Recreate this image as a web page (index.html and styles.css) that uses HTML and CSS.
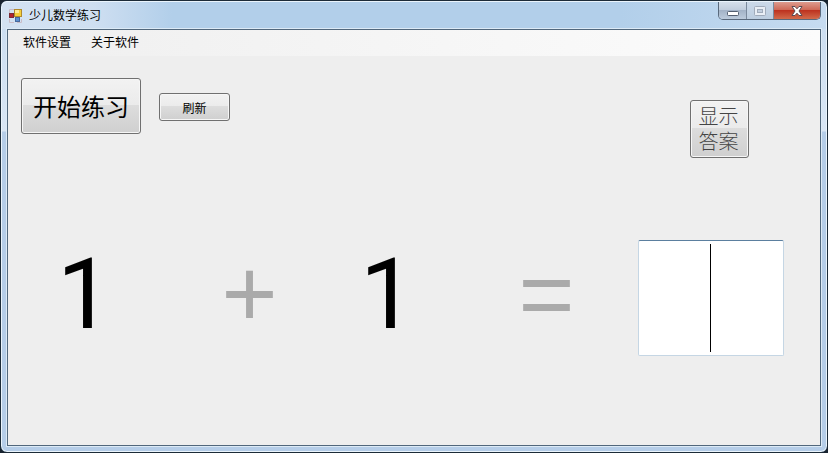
FILE: index.html
```html
<!DOCTYPE html>
<html lang="zh-CN">
<head>
  <meta charset="UTF-8">
  <title>少儿数学练习</title>
  <link rel="stylesheet" href="styles.css">
</head>
<body>

  <div class="window">

    <!-- TITLE BAR -->
    <header class="titlebar">
      <svg class="app-icon" width="14" height="14" viewBox="0 0 14 14">
        <path d="M0.5 4V0.5H5M0.5 10V13.5H5M8 13.5H12.5V10" fill="none" stroke="#c9bcc6"/>
        <rect x="0.5" y="4.5" width="4" height="4" fill="#b5232b" stroke="#7a2a35"/>
        <rect x="5.5" y="0.5" width="7" height="7" fill="#f5cf3a" stroke="#b08a2c"/>
        <rect x="6" y="1" width="4" height="3" fill="#fdeb9a"/>
        <rect x="6.5" y="8.5" width="4" height="4" fill="#5b8fd0" stroke="#46699c"/>
      </svg>
      <h1>少儿数学练习</h1>
      <div class="window-buttons">
        <button class="minimize" aria-label="最小化">
          <svg width="14" height="6" viewBox="0 0 14 6">
            <rect x="1.5" y="0.5" width="11" height="4" rx="1" fill="#fff" stroke="#535f70"/>
          </svg>
        </button>
        <button class="maximize" aria-label="最大化" disabled>
          <svg width="12" height="10" viewBox="0 0 12 10">
            <rect x="0.5" y="0.5" width="11" height="9" rx="1" fill="#e9eef5" stroke="#a0abba"/>
            <rect x="3.5" y="3.5" width="5" height="3" fill="#c3cfde" stroke="#a0abba"/>
          </svg>
        </button>
        <button class="close" aria-label="关闭">
          <svg width="12" height="10" viewBox="0 0 12 10">
            <path d="M1 0.5H4L6 2.8L8 0.5H11L8 5L11 9.5H8L6 7.2L4 9.5H1L4 5Z" fill="#fff" stroke="#5b4a52"/>
          </svg>
        </button>
      </div>
    </header>

    <div class="client">

      <!-- MENU -->
      <nav>
        <a href="#settings">软件设置</a>
        <a href="#about">关于软件</a>
      </nav>

      <main>
        <div class="toolbar">
          <button class="btn start">开始练习</button>
          <button class="btn refresh">刷新</button>
          <button class="btn answer">显示<br>答案</button>
        </div>

        <!-- EQUATION -->
        <form class="equation">
          <span class="number">1</span>
          <span class="sign">+</span>
          <span class="number">1</span>
          <span class="sign">=</span>
          <input type="text" class="result" aria-label="答案" autocomplete="off">
        </form>
      </main>

    </div>
  </div>

</body>
</html>
```

FILE: styles.css
```css
* {
  box-sizing: border-box;
}

body {
  margin: 0;
  background: #17222e;
  font-family: "Liberation Sans", "Noto Sans CJK SC", sans-serif;
  font-size: 12px;
  color: #000;
}

button, input {
  font-family: inherit;
  margin: 0;
}

.window {
  display: flex;
  flex-direction: column;
  min-height: 100vh;
  padding: 0 6px 6px;
  border: 1px solid #1c2b38;
  border-radius: 7px;
  background: linear-gradient(#c9dcf0 0, #d9e6f4 130px, #b5cde8 131px, #b5cde8 100%);
  box-shadow: inset 0 0 0 1px #eaf4fc;
}

/* Title bar */
.titlebar {
  display: flex;
  align-items: center;
  height: 28px;
  margin: 0 -5px;
  padding: 0 5px 0 7px;
  border-top: 1px solid #eaf4fc;
  border-radius: 6px 6px 0 0;
  background: linear-gradient(to right, #d3e2f2 0, #cfdff1 90px, #b2cfea 170px, #b2cfea 75%, #c6dbf0 100%);
}

.titlebar h1 {
  flex: 1;
  margin: 0 0 0 6px;
  padding-bottom: 2px;
  font-size: 12px;
  font-weight: normal;
}

.window-buttons {
  display: flex;
  align-self: flex-start;
  border: 1px solid #59697c;
  border-top: none;
  border-radius: 0 0 5px 5px;
  overflow: hidden;
}

.window-buttons button {
  display: flex;
  align-items: center;
  justify-content: center;
  width: 28px;
  height: 17px;
  padding: 0;
  border: none;
  border-right: 1px solid #7a899c;
  background: linear-gradient(#d5dfeb 0, #bfccdc 50%, #a3b3c7 50%, #bccbdc 100%);
}

.window-buttons .minimize {
  padding-top: 6px;
}

.window-buttons .maximize {
  width: 27px;
  background: linear-gradient(#cbd9e9, #bccddf);
}

.window-buttons .close {
  width: 46px;
  border-right: none;
  background: linear-gradient(#dd9c8f 0, #cf6a58 45%, #bd3320 50%, #d26b4b 100%);
}

/* Client area */
.client {
  flex: 1;
  display: flex;
  flex-direction: column;
  border: 1px solid #51677c;
  background: #eee;
  box-shadow: 0 0 0 1px #dceaf6;
}

nav {
  display: flex;
  gap: 20px;
  padding: 4px 15px;
  line-height: 18px;
  background: linear-gradient(to right, #efefef, #fcfcfc);
}

nav a {
  color: #000;
  text-decoration: none;
}

main {
  padding: 22px 36px 0 13px;
}

.toolbar {
  display: flex;
  align-items: flex-start;
  gap: 18px;
}

.btn {
  padding: 0;
  border: 1px solid #707070;
  border-radius: 3px;
  background: linear-gradient(#f2f2f2 0, #ebebeb 48%, #dddddd 48%, #cfcfcf 100%);
  box-shadow: inset 0 0 0 1px #f6f6f6;
  color: #000;
}

.start {
  width: 120px;
  height: 56px;
  padding-bottom: 2px;
  font-size: 24px;
}

.refresh {
  width: 71px;
  height: 28px;
  margin-top: 15px;
  font-size: 12px;
}

.answer {
  width: 59px;
  height: 58px;
  margin: 22px 35px 0 auto;
  padding: 2px 2px 0 0;
  font-size: 20px;
  font-weight: 300;
  line-height: 25px;
  color: #444;
}

/* Equation */
.equation {
  display: grid;
  grid-template-columns: 165fr 139fr 159fr 120fr 146px;
  align-items: start;
  padding-left: 36px;
  margin-top: 82px;
}

.number {
  font-family: Roboto, sans-serif;
  font-size: 98px;
  line-height: 110px;
}

.sign {
  font-size: 96px;
  line-height: 108px;
  color: #aaa;
}

.result {
  width: 100%;
  height: 116px;
  padding: 0;
  border: 1px solid #c5d6e4;
  border-top-color: #5b7f9f;
  border-radius: 2px;
  font-size: 96px;
  text-align: center;
  outline: none;
  caret-color: transparent;
  background: linear-gradient(#000, #000) center / 1px 108px no-repeat #fff;
}
```
